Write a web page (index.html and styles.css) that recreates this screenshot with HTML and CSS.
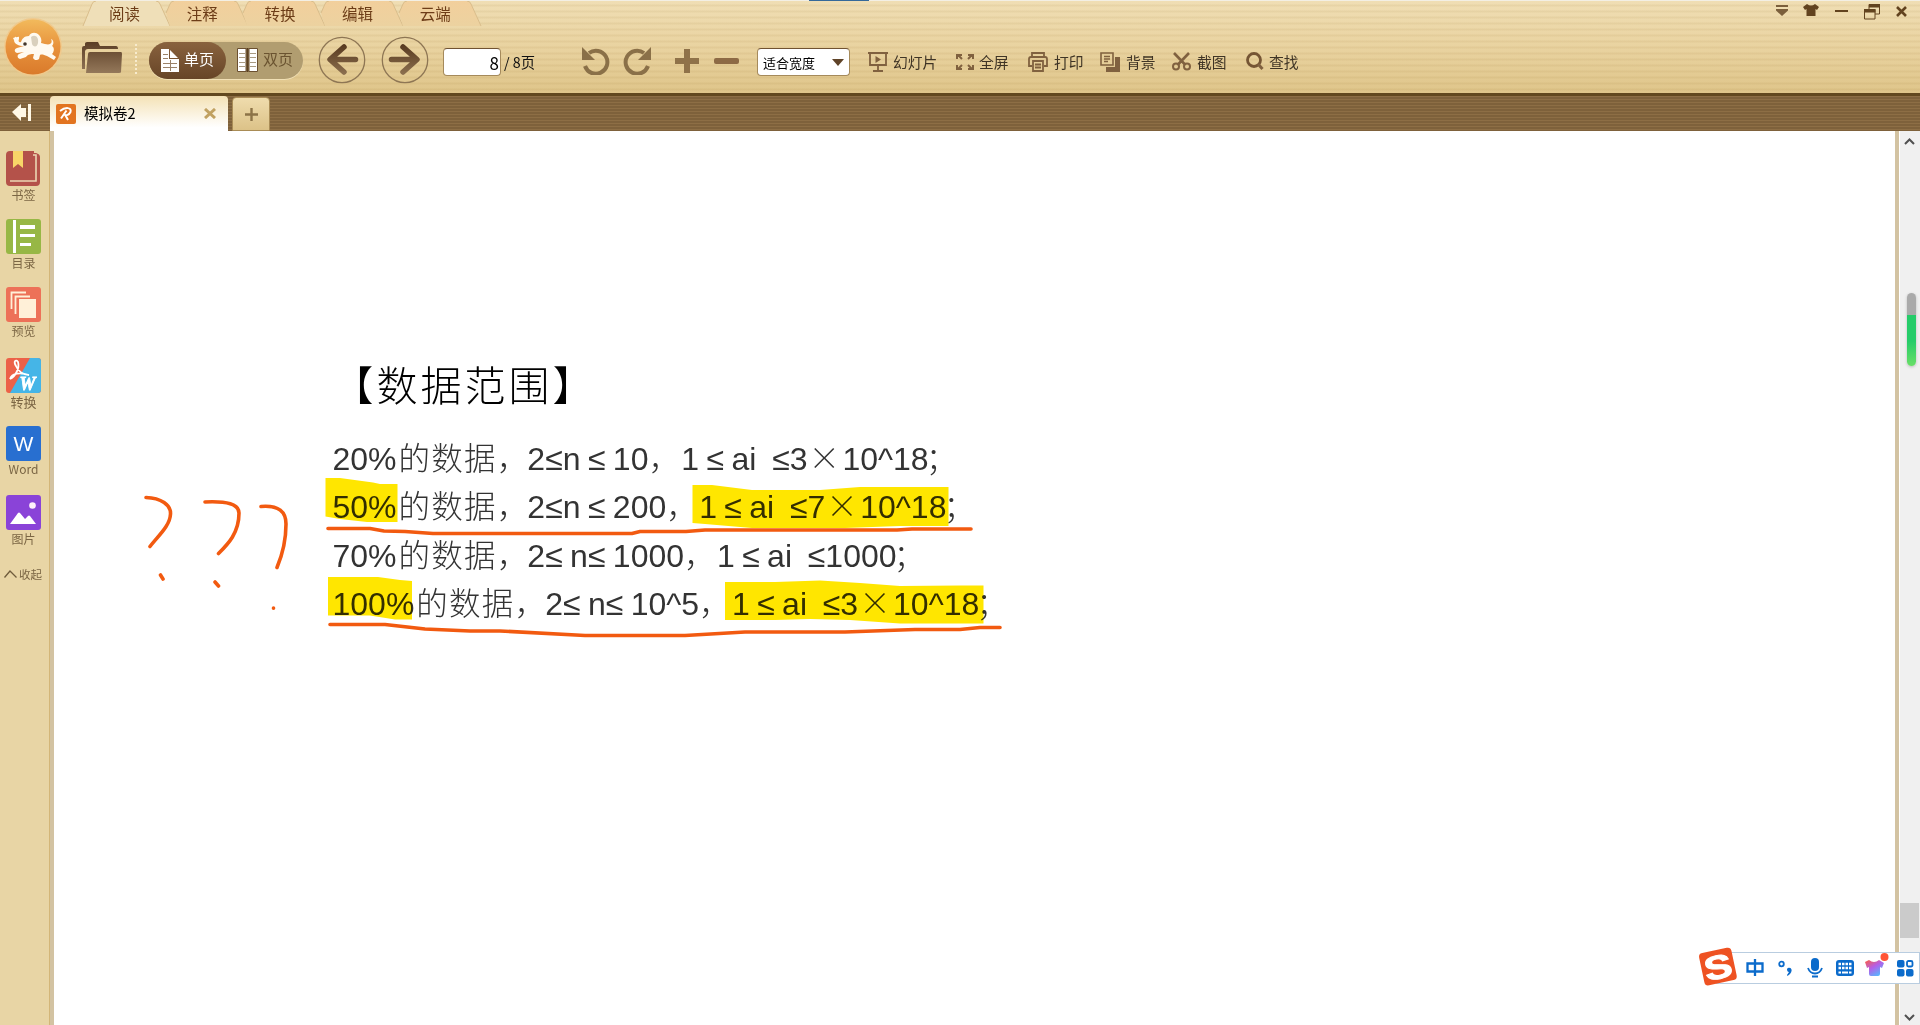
FILE: index.html
```html
<!DOCTYPE html>
<html lang="zh-CN">
<head>
<meta charset="utf-8">
<title>模拟卷2</title>
<link rel="stylesheet" href="styles.css">
</head>
<body>
<div class="app">
  <header class="header">
    <i class="top-mark"></i>
    <svg class="logo" viewBox="0 0 60 60">
      <defs><linearGradient id="lg" x1="0" y1="0" x2="0" y2="1"><stop offset="0" stop-color="#f2ba5c"/><stop offset=".5" stop-color="#e8923c"/><stop offset="1" stop-color="#d97a2b"/></linearGradient></defs>
      <circle cx="30" cy="30" r="29" fill="#f0c98c"/>
      <circle cx="30" cy="30" r="27.5" fill="url(#lg)"/>
      <path fill="#fffaf0" d="M10 21c2 0 2-2 3-1s2-1 3 0l0 2c-1 2 0 4 2 3 1-3 3-6 8-6 2-4 7-4 10-1 2 2 3 5 2 8 4 1 7 2 9 1 2-1 2-3 1-5 3 1 3 5 1 7 3 2 2 6 0 8l4 3-2 3-7-4c-3-1-5-2-7-1l-1 4c-2 2-5 1-6-1l1-4c-3 0-6 0-8 3l-6 2c-3-1-3-4-1-5l5-2-7 1c-3-1-3-4 0-5l7-2c-5 0-10-2-10-6z"/>
      <path fill="#d9d0bd" d="M28 20c4-3 8 0 7 6-1 5-5 4-6 1z"/><circle cx="22" cy="27" r="1.800" fill="#43372b"/>
    </svg>
    <div class="header-main">
      <nav class="menu">
        <a class="menu-tab active"><svg viewBox="0 0 90 25"><defs><linearGradient id="tg" x1="0" y1="0" x2="0" y2="1"><stop offset="0" stop-color="#f2cf9c"/><stop offset="1" stop-color="#ecd2a0"/></linearGradient></defs><path d="M1 25 10 3Q11 0 14 0H74Q77 0 78 3L88 25Z"/><path class="edge" d="M1 25 10 3Q11 0 14 0M74 0Q77 0 78 3L88 25"/></svg><span>阅读</span></a>
        <a class="menu-tab"><svg viewBox="0 0 90 25"><path d="M6 12 10 3Q11 0 14 0H74Q77 0 78 3L88 25H10Z"/><path class="edge" d="M6 12 10 3Q11 0 14 0M74 0Q77 0 78 3L88 25"/></svg><span>注释</span></a>
        <a class="menu-tab"><svg viewBox="0 0 90 25"><path d="M6 12 10 3Q11 0 14 0H74Q77 0 78 3L88 25H10Z"/><path class="edge" d="M6 12 10 3Q11 0 14 0M74 0Q77 0 78 3L88 25"/></svg><span>转换</span></a>
        <a class="menu-tab"><svg viewBox="0 0 90 25"><path d="M6 12 10 3Q11 0 14 0H74Q77 0 78 3L88 25H10Z"/><path class="edge" d="M6 12 10 3Q11 0 14 0M74 0Q77 0 78 3L88 25"/></svg><span>编辑</span></a>
        <a class="menu-tab"><svg viewBox="0 0 90 25"><path d="M6 12 10 3Q11 0 14 0H74Q77 0 78 3L88 25H10Z"/><path class="edge" d="M6 12 10 3Q11 0 14 0M74 0Q77 0 78 3L88 25"/></svg><span>云端</span></a>
      </nav>
      <div class="toolbar">
        <svg class="folder" viewBox="0 0 40 32"><defs><linearGradient id="fg" x1="0" y1="0" x2="0" y2="1"><stop offset="0" stop-color="#5a3d25"/><stop offset="1" stop-color="#94785a"/></linearGradient></defs><path fill="url(#fg)" d="M0 27V6Q0 4 2 4H3V1.500Q3 0 5 0H16L18 4H34Q36 4 36 7H6Q3 7 3 10V27ZM6 12Q6 10 8 10H39Q40 10 40 12L39 30Q39 31 37 31H4Z"/></svg>
        <i class="divider"></i>
        <div class="pill">
          <div class="pill-item on"><svg width="18" height="23" viewBox="0 0 18 23"><path fill="#fff" d="M0 0H8V10H18V23H0ZM9 1 17 9H9Z"/><path stroke="#9b8269" fill="none" d="M2 5.500H7M2 9.500H7M2 14.500H16M2 18.500H16M9.500 11V22"/></svg><span>单页</span></div>
          <div class="pill-item"><svg width="21" height="24" viewBox="0 0 21 24"><path fill="#fff" stroke="#6b5030" d="M.5.500H9V23.500H.5ZM12 .500H20.500V23.500H12Z"/><path stroke="#a99b82" d="M2 5.500H8M2 9.500H8M2 14.500H8M2 18.500H8M13 5.500H19M13 9.500H19M13 14.500H19M13 18.500H19"/><path stroke="#5b4022" stroke-width="2" d="M10.500 0V24"/></svg><span>双页</span></div>
        </div>
        <svg class="round prev" viewBox="0 0 48 48"><defs><linearGradient id="ag" gradientUnits="userSpaceOnUse" x1="0" y1="9" x2="0" y2="39"><stop offset="0" stop-color="#583a20"/><stop offset="1" stop-color="#8d7150"/></linearGradient></defs><circle cx="24" cy="24" r="22.700"/><path d="M26 11 12 23.500 26 36M13 23.500H37.500"/></svg>
        <svg class="round next" viewBox="0 0 48 48"><circle cx="24" cy="24" r="22.700"/><path d="M22 11 36 23.500 22 36M35 23.500H10.500"/></svg>
        <div class="page-input">8</div>
        <span class="page-total">/ 8页</span>
        <svg class="undo" viewBox="0 0 28 28"><path fill="none" stroke="#8a7048" stroke-width="4" d="M7 6A11.500 11.500 0 1 1 3 19"/><path fill="#8a7048" d="M0 0V13H13Z"/></svg>
        <svg class="redo" viewBox="0 0 28 28"><path fill="none" stroke="#8a7048" stroke-width="4" d="M21 6A11.500 11.500 0 1 0 25 19"/><path fill="#8a7048" d="M28 0V13H15Z"/></svg>
        <svg class="plus" viewBox="0 0 24 24"><path fill="#8f7249" d="M9 0H15V9H24V15H15V24H9V15H0V9H9Z"/></svg>
        <i class="minus"></i>
        <div class="select"><span>适合宽度</span><svg width="12" height="7"><path fill="#5f4328" d="M0 0H12L6 7Z"/></svg></div>
        <a class="tool t1"><svg width="20" height="20" viewBox="0 0 20 20"><path fill="#80613f" d="M0 0H20V2H0Z"/><path fill="none" stroke="#80613f" stroke-width="1.800" d="M2 2V13H18V2M10 13V18M5 19H15"/><path fill="#80613f" d="M7.500 4 13 7.500 7.500 11Z"/></svg><span>幻灯片</span></a>
        <a class="tool t2"><svg width="18" height="18" viewBox="0 0 18 18"><path fill="none" stroke="#80613f" stroke-width="2" d="M1 6V2H6M2 2 6 6M12 2H17V6M16 2 12 6M1 12V16H6M2 16 6 12M12 16H17V12M16 16 12 12"/></svg><span>全屏</span></a>
        <a class="tool t3"><svg width="20" height="20" viewBox="0 0 20 20"><path fill="none" stroke="#80613f" stroke-width="1.800" d="M4 5V1H16V5M4 14H1V7Q1 5 3 5H17Q19 5 19 7V14H16M5 9H15V19H5ZM7 12.500H13M7 15.500H13"/></svg><span>打印</span></a>
        <a class="tool t4"><svg width="20" height="20" viewBox="0 0 20 20"><path fill="none" stroke="#80613f" stroke-width="1.600" d="M1 1H13V13H1ZM4 4.500H10M4 7H10M4 9.500H8"/><path fill="#80613f" d="M15 5H20V20H6V15H15Z"/></svg><span>背景</span></a>
        <a class="tool t5"><svg width="19" height="19" viewBox="0 0 19 19"><path fill="none" stroke="#80613f" stroke-width="2.600" d="M2 1 13.500 13M17 1 5.500 13"/><circle cx="4" cy="14.500" r="3" fill="none" stroke="#80613f" stroke-width="2"/><circle cx="15" cy="14.500" r="3" fill="none" stroke="#80613f" stroke-width="2"/></svg><span>截图</span></a>
        <a class="tool t6"><svg width="18" height="19" viewBox="0 0 18 19"><circle cx="8" cy="8" r="6.500" fill="none" stroke="#755534" stroke-width="2.800"/><path stroke="#80613f" stroke-width="3" d="M12 12 16.500 17"/></svg><span>查找</span></a>
      </div>
    </div>
    <div class="window-buttons">
      <svg width="12" height="12" viewBox="0 0 12 12"><path fill="#7b5f3c" d="M0 0H12V2H0ZM0 4H12V5.500L6 11 0 5.500Z"/></svg>
      <svg width="16" height="13" viewBox="0 0 16 13"><path fill="#62431f" d="M4 0Q8 3 12 0L16 3 14 6 12.500 5V12H3.500V5L2 6 0 3Z"/></svg>
      <svg width="13" height="12" viewBox="0 0 13 12"><path fill="#62431f" d="M0 6H13V8H0Z"/></svg>
      <svg width="16" height="16" viewBox="0 0 16 16"><path fill="none" stroke="#62431f" d="M5 5V.5H15.500V10H11M.5 5.500H11V15H.5Z"/><path fill="#62431f" d="M5 0H16V3.500H5ZM0 5H11.500V8.500H0Z"/></svg>
      <svg width="11" height="11" viewBox="0 0 11 11"><path stroke="#62431f" stroke-width="2.600" d="M1 1 10 10M10 1 1 10"/></svg>
    </div>
  </header>

  <div class="tabbar">
    <svg class="collapse" width="20" height="17" viewBox="0 0 20 17"><path fill="#fff8e6" d="M0 8 9 0V4H14V13H9V17ZM16 0H19V17H16Z"/></svg>
    <div class="doc-tab">
      <svg width="20" height="20" viewBox="0 0 20 20"><rect width="20" height="20" rx="2" fill="#e27420"/><path fill="none" stroke="#fff" stroke-width="2" d="M4 7C9 3 16 3 14.500 8 13 11 10 12 9 10.500M10.500 6.500 5 14.500M9 10.500 12 16"/></svg>
      <span>模拟卷2</span>
      <svg width="12" height="11" viewBox="0 0 12 11"><path stroke="#c1a161" stroke-width="3" d="M1 1 11 10M11 1 1 10"/></svg>
    </div>
    <div class="new-tab"><svg width="13" height="13" viewBox="0 0 13 13"><path stroke="#8c7347" stroke-width="2.400" d="M6.500 0V13M0 6.500H13"/></svg></div>
  </div>

  <div class="body">
    <aside class="sidebar">
      <a class="side"><svg viewBox="0 0 35 35"><path fill="#b4524a" d="M4 0H28V2H30Q34 3 34 6V31Q34 35 30 35H4Q0 35 0 31V4Q0 0 4 0Z"/><path fill="none" stroke="#ecd6b4" stroke-width="1.600" d="M27 4H30V30H4"/><path fill="#f8d568" d="M7 0H17V17L12 13 7 17Z"/></svg><span>书签</span></a>
      <a class="side"><svg viewBox="0 0 35 35"><rect width="35" height="35" rx="3" fill="#97b745"/><path fill="#fff" d="M7 1H10V34H7ZM14 6H29V10H14ZM14 15H29V18H14ZM14 24H25V27H14Z"/></svg><span>目录</span></a>
      <a class="side"><svg viewBox="0 0 35 35"><rect width="35" height="35" rx="3" fill="#ed7158"/><path fill="none" stroke="#fff0d8" stroke-width="1.800" d="M5.500 22V5.500H20M9.500 27V9.500H24"/><path fill="#fff0d8" d="M13 12H30V31H13Z"/></svg><span>预览</span></a>
      <a class="side convert"><svg viewBox="0 0 35 35"><rect width="35" height="35" rx="3" fill="#ec6148"/><path fill="#45b5e7" d="M24 0H32Q35 0 35 3V32Q35 35 32 35H4Z"/><path fill="none" stroke="#fff" stroke-width="1.800" d="M4 21C9 19 14 10 12 4 10 1 7 3 10 8 12 13 17 17 23 17M4 21C6 15 14 14 23 17"/><text x="13.500" y="32" fill="#fff" stroke="#fff" stroke-width=".8" font-family="Liberation Serif, serif" font-size="18" font-weight="700" font-style="italic">W</text></svg><span>转换</span></a>
      <a class="side word"><svg viewBox="0 0 35 35"><rect width="35" height="35" rx="3" fill="#286fd0"/><text x="17.500" y="25" text-anchor="middle" fill="#fff" font-family="Liberation Sans, sans-serif" font-size="21">W</text></svg><span>Word</span></a>
      <a class="side pic"><svg viewBox="0 0 35 35"><rect width="35" height="35" rx="3" fill="#8a43d8"/><circle cx="26.500" cy="10.500" r="3.300" fill="#fff0fa"/><path fill="#fff" d="M4 29 12 18Q13 17 14 18L19 24 22 21Q23 20 24 21L30 29Z"/></svg><span>图片</span></a>
      <a class="fold"><svg width="13" height="8" viewBox="0 0 13 8"><path fill="none" stroke="#6f5c3c" stroke-width="1.300" d="M.5 7.500 6 1 12.500 7.500"/></svg><span>收起</span></a>
    </aside>
    <main class="page">
      <svg class="marks" width="900" height="320" viewBox="120 360 900 320">
        <g class="hl">
          <path d="M325.500 478H340L373 482.500 380 484H397.500V522H367L340 519 325.500 516.500Z"/>
          <path d="M692.500 485H712L752 490H820L860 487H948.500V526H900L845 528H752L705 524 692.500 523Z"/>
          <path d="M328 577H378L400 580 412 581V619.500H395L370 615.500H328Z"/>
          <path d="M725 582H775L820 580.500 860 583 900 586 960 585.500H983.500V623.500H900L850 620 810 619 775 620H725Z"/>
        </g>
        <g class="pen">
          <path d="M328 528.500H370L384 531 405 531.500 433 533.500H632L640 531.500H686L705 530H897L912 529H971"/>
          <path d="M330 624.500H385L425 629 470 631 500 631 585 635.500H685L745 632H845L915 629.500H960L980 627.500H1000"/>
          <path d="M146 497.500C161 498 171 505 170.500 514 170 526 158 536 150 546.500M160.500 575 163 579"/>
          <path d="M205 502C227 501 239 504 239 513 239 533 228 544 218.500 553.500M215 582 218.500 586"/>
          <path d="M261 506.500C279 505 286 512 286 524 286 543 281 558 277 567.500M273.500 608V608.300"/>
        </g>
      </svg>
      <h1>【数据范围】</h1>
      <p>20%<b class="lead">的数据，</b>2≤n ≤ 10<b>，</b>1 ≤ ai<u>&nbsp;</u> ≤3<b class="times">×</b>10^18<b class="semi">；</b></p>
      <p>50%<b class="lead">的数据，</b>2≤n ≤ 200<b>，</b>1 ≤ ai<u>&nbsp;</u> ≤7<b class="times">×</b>10^18<b class="semi">；</b></p>
      <p>70%<b class="lead">的数据，</b>2≤ n≤ 1000<b>，</b>1 ≤ ai<u>&nbsp;</u> ≤1000<b class="semi">；</b></p>
      <p>100%<b class="lead">的数据，</b>2≤ n≤ 10^5<b>，</b>1 ≤ ai<u>&nbsp;</u> ≤3<b class="times">×</b>10^18<b class="semi">；</b></p>
    </main>
    <div class="scroll">
      <svg width="11" height="7" viewBox="0 0 11 7"><path fill="none" stroke="#505050" stroke-width="2" d="M1 6 5.500 1.500 10 6"/></svg>
      <i class="thumb"></i>
      <svg width="11" height="7" viewBox="0 0 11 7"><path fill="none" stroke="#505050" stroke-width="2" d="M1 1 5.500 5.500 10 1"/></svg>
      <i class="gauge"></i>
    </div>
  </div>

  <div class="ime">
    <svg class="ime-logo" width="42" height="42" viewBox="0 0 42 42"><g transform="rotate(-12 21 21)"><rect x="4.500" y="4" width="33" height="33" rx="4" fill="#ee5222"/><text x="21" y="32.500" text-anchor="middle" fill="#fff" stroke="#fff" stroke-width="1" font-family="Liberation Sans, sans-serif" font-size="33" font-weight="700" textLength="28" lengthAdjust="spacingAndGlyphs">S</text></g></svg>
    <svg class="zh" width="18" height="18" viewBox="0 0 18 18"><path fill="none" stroke="#0b6bcb" stroke-width="2.300" d="M9 0V17M1.500 4.500H16.500V12.500H1.500Z"/></svg>
    <svg width="15" height="16" viewBox="0 0 15 16"><circle cx="3.500" cy="4" r="2.300" fill="none" stroke="#0b6bcb" stroke-width="1.800"/><path fill="#0b6bcb" d="M9 9Q10 7 12.500 8 15 10 12 14L9.500 16 9 15 11 12Q9 12 9 9Z"/></svg>
    <svg width="16" height="20" viewBox="0 0 16 20"><rect x="4" width="8" height="13" rx="4" fill="#0b6bcb"/><path fill="none" stroke="#0b6bcb" stroke-width="1.800" d="M1 10Q3 15.500 8 15.500 13 15.500 15 10M5 18.500H11"/></svg>
    <svg width="18" height="16" viewBox="0 0 18 16"><rect width="18" height="16" rx="3" fill="#0b6bcb"/><path stroke="#fff" stroke-width="2.500" stroke-dasharray="2.500 1" d="M2.500 4H16M2.500 8H16"/><path stroke="#fff" stroke-width="2" d="M2.500 12.500H5M6 12.500H12M13 12.500H15.500"/></svg>
    <svg width="24" height="24" viewBox="0 0 24 24"><defs><linearGradient id="sg" x1="0" y1="0" x2=".7" y2="1"><stop offset="0" stop-color="#ff5d3d"/><stop offset=".5" stop-color="#b45fe8"/><stop offset="1" stop-color="#54b8ff"/></linearGradient></defs><path fill="url(#sg)" d="M4 7Q9 11 14 7L19 10 17 15 15 14V21Q15 23 13 23H6Q4 23 4 21V14L2 15 0 9Z"/><circle cx="19.500" cy="4" r="4" fill="#ff5436"/></svg>
    <svg width="17" height="17" viewBox="0 0 17 17"><g fill="#0b6bcb"><rect width="7.500" height="7.500" rx="2"/><rect y="9" width="7.500" height="7.500" rx="2"/><rect x="9" y="9" width="7.500" height="7.500" rx="2"/></g><rect x="10" y="1" width="5.500" height="5.500" rx="1.500" fill="none" stroke="#0b6bcb" stroke-width="1.800"/></svg>
  </div>
</div>
</body>
</html>
```
FILE: styles.css
```css
* { box-sizing: border-box; }
body { margin: 0; font-family: "Noto Sans CJK SC", sans-serif; }
svg { display: block; flex: none; }
i { display: block; flex: none; }

.app { position: relative; width: 1920px; height: 1025px; display: flex; flex-direction: column; overflow: hidden; background: #fff; }

.header {
  position: relative; flex: none; height: 96px; display: flex;
  border-top: 1px solid #f3efe4; border-bottom: 3px solid #62481f;
  background:
    repeating-linear-gradient(rgba(140, 100, 30, 0) 0 3px, rgba(140, 100, 30, .08) 4px 5px, rgba(140, 100, 30, 0) 6px),
    linear-gradient(#f0deb4, #e9d3a0 50%, #dfc58a);
}
.top-mark { position: absolute; left: 809px; top: -1px; width: 60px; height: 1px; background: #35699a; }
.logo { width: 60px; height: 60px; margin: 16px 0 0 3px; }
.header-main { flex: 1; padding-left: 19px; }

.menu { display: flex; height: 25px; }
.menu-tab { position: relative; width: 77.7px; height: 25px; padding-left: 27px; color: #6d3d18; font-size: 15.500px; line-height: 25px; white-space: nowrap; }
.menu-tab svg { position: absolute; left: 0; top: 0; width: 90px; height: 25px; fill: url(#tg); }
.menu-tab.active svg { fill: #efdfb8; }
.menu-tab .edge { fill: none; stroke: #d9bd8b; stroke-width: 1; }
.menu-tab span { position: relative; }

.toolbar { display: flex; align-items: center; height: 67px; color: #3f3425; }
.folder { width: 40px; height: 32px; margin-top: -3px; }
.divider { width: 2px; height: 32px; margin: 0 12px 0 13px; background: repeating-linear-gradient(#f7ebcd 0 2px, transparent 2px 4px); }
.pill { display: flex; width: 154px; height: 37px; margin-top: 1px; border-radius: 19px; background: #b19d70; box-shadow: 0 1px 0 #f1e0b5; }
.pill-item { display: flex; align-items: center; gap: 5px; width: 77px; padding-left: 11px; font-size: 15px; line-height: 20px; color: #6a5330; white-space: nowrap; }
.pill-item span { margin-top: -2px; }
.pill-item.on { padding-left: 12px; border-radius: 19px; background: linear-gradient(#89623e, #674527); color: #fff; }
.round { width: 48px; height: 48px; fill: none; stroke: #8e7654; stroke-width: 1.300; }
.round path { stroke: url(#ag); stroke-width: 5.500; stroke-linecap: round; stroke-linejoin: round; }
.prev { margin-left: 14.500px; }
.next { margin-left: 15px; }
.page-input { width: 58px; height: 28px; margin: 5px 0 0 14.500px; padding-right: 1px; border: 1px solid #a58a5b; border-top-color: #705332; border-radius: 4px; background: #fff; color: #000; font-size: 17px; line-height: 28px; text-align: right; }
.page-total { width: 78px; margin: 4px 0 0 3px; font-size: 14.300px; color: #111; white-space: pre; }
.undo, .redo { width: 28px; height: 28px; margin-top: 2px; }
.redo { margin-left: 13px; }
.plus { width: 24px; height: 24px; margin: 3px 0 0 24px; }
.minus { width: 25px; height: 6px; margin: 3px 0 0 15px; border-radius: 2px; background: #8d6a45; }
.select { display: flex; align-items: center; justify-content: space-between; width: 93px; height: 28px; margin: 5px 0 0 18px; padding: 0 5px; border: 1px solid #a58a5b; border-top-color: #705332; border-radius: 4px; background: #fff; color: #000; font-size: 13px; white-space: nowrap; }
.tool { display: flex; align-items: center; gap: 5px; margin-top: 4px; font-size: 14.800px; white-space: nowrap; }
.t1 { width: 88px; margin-left: 18px; }
.t2 { width: 72px; }
.t3, .t4 { width: 72px; gap: 6px; }
.t5 { width: 74px; gap: 6px; }

.window-buttons { display: flex; align-items: flex-start; padding: 4px 13px 0 0; }
.window-buttons svg { margin-left: 17px; }
.window-buttons svg:nth-child(2) { margin: -1px 0 0 15px; }
.window-buttons svg:nth-child(3) { margin: -1px 0 0 16px; }
.window-buttons svg:nth-child(4) { margin: -1px 0 0 15.500px; }
.window-buttons svg:nth-child(5) { margin: 1px 0 0 16.500px; }

.tabbar { flex: none; height: 35px; display: flex; align-items: flex-end; background: repeating-linear-gradient(#8d6e45 0 1px, #7e613b 1px 3px); }
.collapse { margin: 0 18px 10px 12px; }
.doc-tab { display: flex; align-items: center; width: 178px; height: 35px; padding: 0 12px 0 6px; border-radius: 4px 4px 0 0; background: linear-gradient(#f4e2b6, #fff 90%); font-size: 14.500px; line-height: 20px; color: #000; }
.doc-tab span { flex: 1; padding-left: 8px; margin-top: -2px; }
.new-tab { display: grid; place-items: center; width: 38px; height: 34px; margin-left: 4px; border: 1px solid #a98c56; border-radius: 4px 4px 0 0; background: linear-gradient(#efdcad, #dcc288); }

.body { flex: 1; min-height: 0; display: flex; }
.sidebar { flex: none; width: 54px; padding: 20px 0 0 6px; border-right: 4px solid #d3c3a2; background: linear-gradient(90deg, #e8d5a5 49px, #d3b678 49px); color: #7b6644; }
.side { display: flex; flex-direction: column; align-items: center; width: 35px; height: 68px; font-size: 12px; line-height: 18px; white-space: nowrap; }
.side svg { width: 35px; height: 35px; }
.side:nth-child(3) { height: 71px; }
.side.word { height: 69px; line-height: 16px; }
.side.convert { font-size: 13px; line-height: 17px; }
.fold { display: flex; align-items: center; gap: 2px; margin: 3px 0 0 -2px; font-size: 11.500px; line-height: 16px; white-space: nowrap; }

.page { position: relative; flex: 1; min-width: 0; padding: 223px 0 0 278.500px; color: #333; font: 32px/48.300px "Liberation Sans", sans-serif; }
.page h1 { margin: -3px 0 19px; height: 65px; font: 300 41px/65px "Noto Sans CJK SC", sans-serif; color: #000; letter-spacing: 3px; }
.page p { margin: 0; height: 48.300px; word-spacing: -1.500px; white-space: nowrap; }
.page b { font: 300 31.500px/1 "Noto Sans CJK SC", sans-serif; letter-spacing: 1.400px; }
.page u { text-decoration: none; letter-spacing: 1px; }
.page b.lead { position: relative; left: 2px; letter-spacing: 1.200px; }
.page b.times { padding: 0 1px; }
.page b.semi { margin-left: -3px; }
.marks { position: absolute; left: 66px; top: 229px; mix-blend-mode: multiply; }
.hl { fill: #ffe600; }
.pen { fill: none; stroke: #f25a10; stroke-width: 3.600; stroke-linecap: round; stroke-linejoin: round; }

.scroll { position: relative; flex: none; width: 25px; display: flex; flex-direction: column; align-items: center; padding: 7px 1px 4px; border-left: 4px solid #d3c3a2; background: linear-gradient(90deg, #fff 1px, #f0f0f0 1px); }
.thumb { width: 19px; height: 35px; margin: 758px 0 auto; background: #cbcbcb; }
.gauge { position: absolute; right: 4px; top: 162px; width: 9px; height: 73px; border-radius: 5px; background: linear-gradient(#aaa 22px, #25cc69 22px 48px, #69df67); box-shadow: 0 1px 3px #bbb; }

.ime { position: absolute; left: 1716px; top: 952px; width: 204px; height: 32px; display: flex; align-items: center; border: 1px solid #b9cde0; background: #fff; }
.ime-logo { margin: -2px 0 0 -20px; overflow: visible; }
.ime svg:nth-child(2) { margin-left: 7px; }
.ime svg:nth-child(3) { margin-left: 14px; }
.ime svg:nth-child(4) { margin-left: 14px; }
.ime svg:nth-child(5) { margin-left: 13px; }
.ime svg:nth-child(6) { margin: -6px 0 0 11px; }
.ime svg:nth-child(7) { margin-left: 8px; }
```
